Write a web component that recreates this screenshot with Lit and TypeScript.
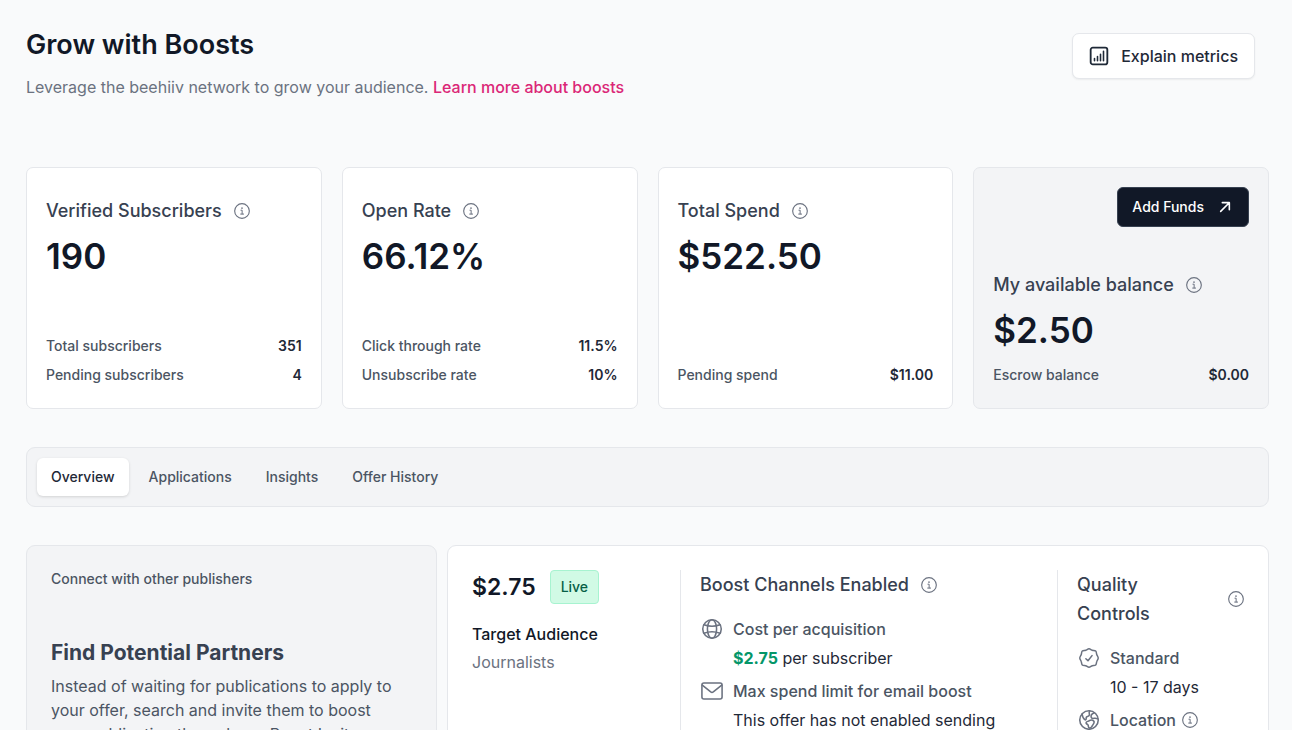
import { LitElement, html, css, svg, TemplateResult } from "lit";
import { customElement, property, state } from "lit/decorators.js";

interface Line {
  label: string;
  value: string;
}

interface Stat {
  title: string;
  value: string;
  lines: Line[];
  action?: string;
}

const STATS: Stat[] = [
  {
    title: "Verified Subscribers",
    value: "190",
    lines: [
      { label: "Total subscribers", value: "351" },
      { label: "Pending subscribers", value: "4" },
    ],
  },
  {
    title: "Open Rate",
    value: "66.12%",
    lines: [
      { label: "Click through rate", value: "11.5%" },
      { label: "Unsubscribe rate", value: "10%" },
    ],
  },
  {
    title: "Total Spend",
    value: "$522.50",
    lines: [{ label: "Pending spend", value: "$11.00" }],
  },
  {
    title: "My available balance",
    value: "$2.50",
    lines: [{ label: "Escrow balance", value: "$0.00" }],
    action: "Add Funds",
  },
];

const TABS = ["Overview", "Applications", "Insights", "Offer History"];

/* Glyphs are drawn on a 24 by 24 grid. */
const ICONS: Record<string, TemplateResult> = {
  info: svg`
    <circle cx="12" cy="12" r="11" />
    <path d="M10.4 10.8h1.8v5.600M10 16.600h4.400" stroke-width="1.500" />
    <circle cx="12" cy="7.700" r="1.200" fill="currentColor" stroke="none" />`,
  chart: svg`
    <rect x="2" y="2" width="20" height="20" rx="2.600" stroke-width="2.200" />
    <path d="M6.600 15v2.600M10.200 12.600v5M13.800 9.800v7.800M17.400 6.400v11.200" stroke-width="1.900" />`,
  arrow: svg`<path d="M5.500 18.500 18 6M8 5.500h10.500V16" stroke-width="2.400" />`,
  globe: svg`
    <circle cx="12" cy="12" r="10.100" />
    <ellipse cx="12" cy="12" rx="5" ry="10.100" />
    <path d="M3.200 7.400c5.400 2 12.200 2 17.600 0M3.200 16.600c5.400-2 12.200-2 17.600 0" />`,
  mail: svg`
    <rect x="1" y="3.200" width="22" height="17.600" rx="2.200" />
    <path d="M1.400 5.600 10.600 13a2.300 2.300 0 0 0 2.800 0l9.200-7.400" />`,
  badge: svg`
    <path transform="translate(.6 .6) scale(.95)" d="M12 1.400c1.500 0 2.400 1.300 3.800 1.700 1.400.4 2.900-.1 3.900.9s.7 2.500 1.200 3.900c.4 1.400 1.700 2.500 1.700 4.100s-1.300 2.700-1.700 4.100c-.5 1.400-.2 2.900-1.200 3.900s-2.500.5-3.900.9c-1.400.4-2.300 1.700-3.800 1.700s-2.400-1.300-3.800-1.700c-1.400-.4-2.900.1-3.900-.9s-.7-2.500-1.200-3.900C2.700 14.700 1.400 13.600 1.400 12s1.300-2.700 1.700-4.100c.5-1.400.2-2.900 1.200-3.900s2.500-.5 3.900-.9c1.400-.4 2.300-1.700 3.800-1.700Z" />
    <path d="m8.600 12.800 2.300 2.200 4.400-5.600" />`,
  earth: svg`
    <circle cx="12" cy="12" r="10.100" />
    <path d="M4.400 5.400c.4 2.900 1.200 5 3 6.200.9.700 1.600 0 1.500-1.100-.1-1.300.5-2.200 1.900-2.500 1.600-.4 1.900-1.600 1.500-3-.3-1.100-.2-2.100.5-2.900" />
    <path d="M17.800 4.200c-2.400.9-3.900 2.600-3.500 4.600.3 1.400 1.800 1.600 3.200 1.400 1.400-.2 2.700-.1 4.100.5M17.200 13.200c-1.500-1.500-3.600-1.300-4.900-.4-1.400.9-3.400.8-3.500 2.200-.1 1.400 1.900 1.600 2.300 2.700.4 1.300 0 2.700 1.400 3.100 1.600.4 2.300-1.300 3.100-2.500.8-1.400 3-3.700 1.600-5.100Z" />`,
};

@customElement("ui-icon")
export class UiIcon extends LitElement {
  @property() name = "info";

  static styles = css`
    :host {
      display: inline-flex;
      flex: none;
      width: 16px;
      height: 16px;
    }
    .glyph {
      width: 100%;
      height: 100%;
      fill: none;
      stroke: currentColor;
      stroke-width: 1.7;
      stroke-linecap: round;
      stroke-linejoin: round;
    }
  `;

  render() {
    return html`<svg class="glyph" viewBox="0 0 24 24" aria-hidden="true">${ICONS[this.name]}</svg>`;
  }
}

@customElement("stat-card")
export class StatCard extends LitElement {
  @property({ attribute: false }) stat!: Stat;

  static styles = css`
    :host {
      display: block;
    }
    .card {
      box-sizing: border-box;
      height: 100%;
      display: flex;
      flex-direction: column;
      padding: 19px;
      border: 1px solid #e5e7eb;
      border-radius: 7px;
      background: #fff;
    }
    .muted {
      background: #f3f4f6;
    }
    .action {
      align-self: flex-end;
      display: flex;
      align-items: center;
      gap: 13px;
      height: 40px;
      margin-bottom: 44px;
      padding: 0 15px 0 14px;
      border: 1px solid #374151;
      border-radius: 6px;
      background: #111827;
      color: #fff;
      font: 500 14px/20px Inter, sans-serif;
    }
    .title {
      display: flex;
      align-items: center;
      gap: 12px;
      margin: 0;
      color: #374151;
      font-size: 18px;
      font-weight: 500;
      line-height: 28px;
    }
    .plain .title {
      margin-top: 10px;
    }
    .title ui-icon {
      color: #6b7280;
    }
    .value {
      margin: 7px 0 0;
      color: #111827;
      font-size: 35px;
      font-weight: 600;
      line-height: 48px;
    }
    .lines {
      display: grid;
      gap: 9px;
      margin: auto 0 0;
      padding: 11px 0 4px;
    }
    .line {
      display: flex;
      justify-content: space-between;
      color: #4b5563;
      font-size: 14px;
      font-weight: 500;
      line-height: 20px;
    }
    .amount {
      margin: 0;
      color: #1f2937;
      font-weight: 600;
    }
  `;

  render() {
    const { title, value, lines, action } = this.stat;
    return html`
      <section class="card ${action ? "muted" : "plain"}">
        ${action
          ? html`<button class="action" type="button">${action}<ui-icon name="arrow"></ui-icon></button>`
          : null}
        <h2 class="title">${title}<ui-icon name="info"></ui-icon></h2>
        <p class="value">${value}</p>
        <dl class="lines">
          ${lines.map(
            (l) => html`<div class="line"><dt>${l.label}</dt><dd class="amount">${l.value}</dd></div>`
          )}
        </dl>
      </section>
    `;
  }
}

@customElement("app-root")
export class AppRoot extends LitElement {
  @state() private tab = TABS[0];

  static styles = css`
    :host {
      display: block;
      box-sizing: border-box;
      height: 100vh;
      overflow: hidden;
      padding: 26px 23px 0 26px;
      background: #f9fafb;
      font-family: Inter, "Liberation Sans", sans-serif;
    }
    .header {
      display: flex;
      justify-content: space-between;
      align-items: flex-start;
      padding-right: 14px;
    }
    .heading {
      margin: 0;
      color: #111827;
      font-size: 27px;
      font-weight: 600;
      line-height: 37px;
    }
    .intro {
      margin: 12px 0 0;
      color: #6b7280;
      font-size: 16px;
      line-height: 24px;
    }
    .link {
      color: #db2777;
      font-weight: 500;
      text-decoration: none;
    }
    .explain {
      display: flex;
      align-items: center;
      gap: 12px;
      height: 46px;
      margin-top: 7px;
      padding: 0 16px;
      border: 1px solid #e5e7eb;
      border-radius: 7px;
      background: #fff;
      box-shadow: 0 1px 2px rgb(0 0 0 / 0.06);
      color: #1f2937;
      font: 500 16px/24px Inter, sans-serif;
    }
    .explain ui-icon {
      width: 20px;
      height: 20px;
    }
    .stats {
      display: grid;
      grid-template-columns: repeat(4, 1fr);
      gap: 20px;
      margin-top: 68px;
    }
    .tabs {
      display: flex;
      gap: 6px;
      margin-top: 38px;
      padding: 10px;
      border: 1px solid #e5e7eb;
      border-radius: 9px;
      background: #f3f4f6;
    }
    .tab {
      height: 38px;
      padding: 0 14px;
      border: 0;
      border-radius: 6px;
      background: none;
      color: #4b5563;
      font: 500 14px/20px Inter, sans-serif;
    }
    .current {
      background: #fff;
      box-shadow: 0 1px 3px rgb(0 0 0 / 0.14);
      color: #1f2937;
    }
    .panels {
      display: grid;
      grid-template-columns: 1fr 2fr;
      gap: 10px;
      margin-top: 38px;
    }
    .panel {
      padding: 24px;
      border: 1px solid #e5e7eb;
      border-radius: 9px;
    }
    .partners {
      background: #f3f4f6;
      color: #4b5563;
    }
    .eyebrow {
      margin: 0;
      font-size: 14px;
      font-weight: 500;
      line-height: 18px;
    }
    .subhead {
      margin: 50px 0 6px;
      color: #374151;
      font-size: 21px;
      font-weight: 700;
      line-height: 30px;
    }
    .copy {
      margin: 0;
      padding-right: 10px;
      font-size: 16px;
      line-height: 24px;
    }
    .offer {
      display: grid;
      grid-template-columns: 208fr 377fr 187fr;
      background: #fff;
    }
    .column {
      min-width: 0;
      font-size: 16px;
      line-height: 24px;
      color: #1f2937;
    }
    .column + .column {
      padding-left: 19px;
      border-left: 1px solid #e5e7eb;
    }
    .price {
      display: flex;
      align-items: center;
      gap: 14px;
      color: #111827;
      font-size: 23px;
      font-weight: 600;
      line-height: 34px;
    }
    .live {
      padding: 5px 10px;
      border: 1px solid #a7f3d0;
      border-radius: 4px;
      background: #d1fae5;
      color: #065f46;
      font-size: 14px;
      font-weight: 500;
      line-height: 22px;
    }
    .audience {
      margin: 18px 0 0;
      color: #111827;
      font-weight: 500;
    }
    .group {
      margin: 4px 0 0;
      color: #6b7280;
    }
    .title {
      display: flex;
      align-items: center;
      gap: 12px;
      margin: 0 0 18px;
      color: #374151;
      font-size: 18px;
      font-weight: 500;
      line-height: 29px;
    }
    .spread {
      justify-content: space-between;
    }
    .phrase {
      max-width: 100px;
    }
    .title ui-icon,
    .item ui-icon {
      color: #6b7280;
    }
    .item {
      display: grid;
      grid-template-columns: 24px 1fr;
      gap: 5px 9px;
      margin-bottom: 9px;
    }
    .item .glyph {
      align-self: center;
      justify-self: center;
      width: 22px;
      height: 22px;
    }
    .name {
      display: flex;
      align-items: center;
      gap: 6px;
      color: #4b5563;
      font-weight: 500;
    }
    .detail {
      grid-column: 2;
    }
    .money {
      color: #059669;
      font-weight: 700;
    }
  `;

  private item(icon: string, name: unknown, detail?: unknown) {
    return html`
      <div class="item">
        <ui-icon class="glyph" name=${icon}></ui-icon>
        <div class="name">${name}</div>
        ${detail ? html`<div class="detail">${detail}</div>` : null}
      </div>
    `;
  }

  render() {
    return html`
      <header class="header">
        <div>
          <h1 class="heading">Grow with Boosts</h1>
          <p class="intro">
            Leverage the beehiiv network to grow your audience.
            <a class="link" href="#boosts">Learn more about boosts</a>
          </p>
        </div>
        <button class="explain" type="button"><ui-icon name="chart"></ui-icon>Explain metrics</button>
      </header>

      <div class="stats">${STATS.map((s) => html`<stat-card .stat=${s}></stat-card>`)}</div>

      <nav class="tabs">
        ${TABS.map(
          (t) => html`<button
            type="button"
            class="tab ${t === this.tab ? "current" : ""}"
            @click=${() => (this.tab = t)}
          >${t}</button>`
        )}
      </nav>

      <div class="panels">
        <section class="panel partners">
          <p class="eyebrow">Connect with other publishers</p>
          <h2 class="subhead">Find Potential Partners</h2>
          <p class="copy">
            Instead of waiting for publications to apply to your offer, search and invite them to boost your
            publication through our Boost Invites.
          </p>
        </section>

        <section class="panel offer">
          <div class="column">
            <div class="price">$2.75<span class="live">Live</span></div>
            <p class="audience">Target Audience</p>
            <p class="group">Journalists</p>
          </div>
          <div class="column">
            <h2 class="title">Boost Channels Enabled<ui-icon name="info"></ui-icon></h2>
            ${this.item("globe", "Cost per acquisition", html`<span class="money">$2.75</span> per subscriber`)}
            ${this.item("mail", "Max spend limit for email boost", "This offer has not enabled sending")}
          </div>
          <div class="column">
            <h2 class="title spread"><span class="phrase">Quality Controls</span><ui-icon name="info"></ui-icon></h2>
            ${this.item("badge", "Standard", "10 - 17 days")}
            ${this.item("earth", html`Location<ui-icon name="info"></ui-icon>`)}
          </div>
        </section>
      </div>
    `;
  }
}
